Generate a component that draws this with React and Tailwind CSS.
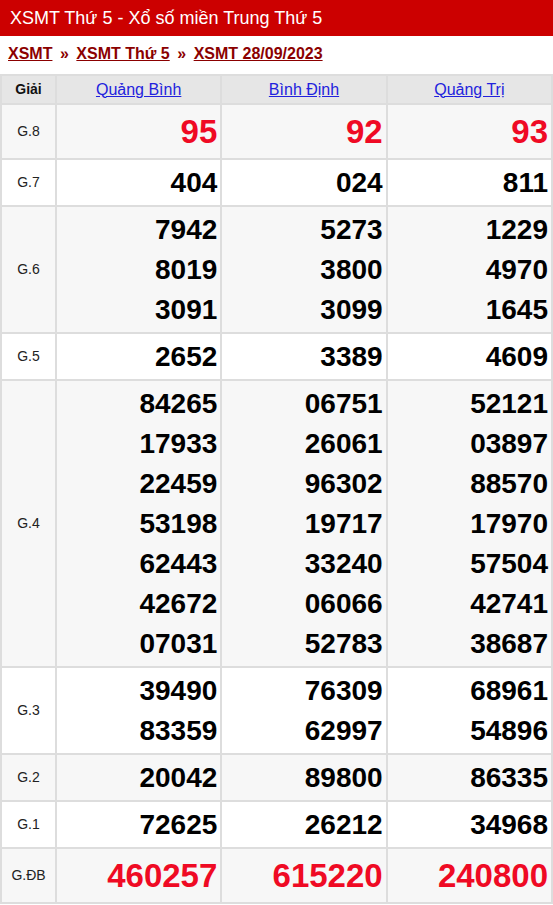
const provinces = ["Quảng Bình", "Bình Định", "Quảng Trị"];

const rows = [
  { name: "G.8", big: true, vals: [["95"], ["92"], ["93"]] },
  { name: "G.7", vals: [["404"], ["024"], ["811"]] },
  { name: "G.6", vals: [["7942", "8019", "3091"], ["5273", "3800", "3099"], ["1229", "4970", "1645"]] },
  { name: "G.5", vals: [["2652"], ["3389"], ["4609"]] },
  {
    name: "G.4",
    vals: [
      ["84265", "17933", "22459", "53198", "62443", "42672", "07031"],
      ["06751", "26061", "96302", "19717", "33240", "06066", "52783"],
      ["52121", "03897", "88570", "17970", "57504", "42741", "38687"],
    ],
  },
  { name: "G.3", vals: [["39490", "83359"], ["76309", "62997"], ["68961", "54896"]] },
  { name: "G.2", vals: [["20042"], ["89800"], ["86335"]] },
  { name: "G.1", vals: [["72625"], ["26212"], ["34968"]] },
  { name: "G.ĐB", big: true, vals: [["460257"], ["615220"], ["240800"]] },
];

export default function App() {
  return (
    <div className="w-[553px] bg-white font-['Liberation_Sans',Arial,sans-serif]">
      <div className="flex h-9 items-center bg-[#cc0000] px-2.5 text-[18px] text-white">
        XSMT Thứ 5 - Xổ số miền Trung Thứ 5
      </div>

      <div className="flex h-9 items-center gap-[7.5px] px-2 text-[16px] font-bold text-[#8b0000]">
        <a href="#" className="underline">XSMT</a>
        <span>»</span>
        <a href="#" className="underline">XSMT Thứ 5</a>
        <span>»</span>
        <a href="#" className="underline">XSMT 28/09/2023</a>
      </div>

      <table className="mt-[2px] w-[553px] table-fixed border-collapse border-2 border-[#dddddd]">
        <colgroup>
          <col className="w-[55px]" />
          <col />
          <col />
          <col />
        </colgroup>
        <thead>
          <tr className="h-[29px] bg-[#e6e6e6]">
            <th className="border-2 border-[#dddddd] text-[14px] font-bold text-[#111]">Giải</th>
            {provinces.map((p) => (
              <th key={p} className="border-2 border-[#dddddd] text-[16px] font-normal">
                <a href="#" className="text-[#2222dd] underline">{p}</a>
              </th>
            ))}
          </tr>
        </thead>
        <tbody>
          {rows.map((r, i) => (
            <tr key={r.name} className={i % 2 === 0 ? "bg-[#f7f7f7]" : "bg-white"}>
              <td className="border-2 border-[#dddddd] text-center text-[14px] text-[#222]">{r.name}</td>
              {r.vals.map((v, j) => (
                <td key={j} className="border-2 border-[#dddddd] pt-[3px] pb-[2px] pr-[3px] text-right font-bold">
                  {v.map((n, k) => (
                    <div
                      key={k}
                      className={
                        r.big
                          ? "text-[33px] leading-[48px] text-[#ef0a24]"
                          : "text-[28px] leading-[40px] text-black"
                      }
                    >
                      {n}
                    </div>
                  ))}
                </td>
              ))}
            </tr>
          ))}
        </tbody>
      </table>
    </div>
  );
}
